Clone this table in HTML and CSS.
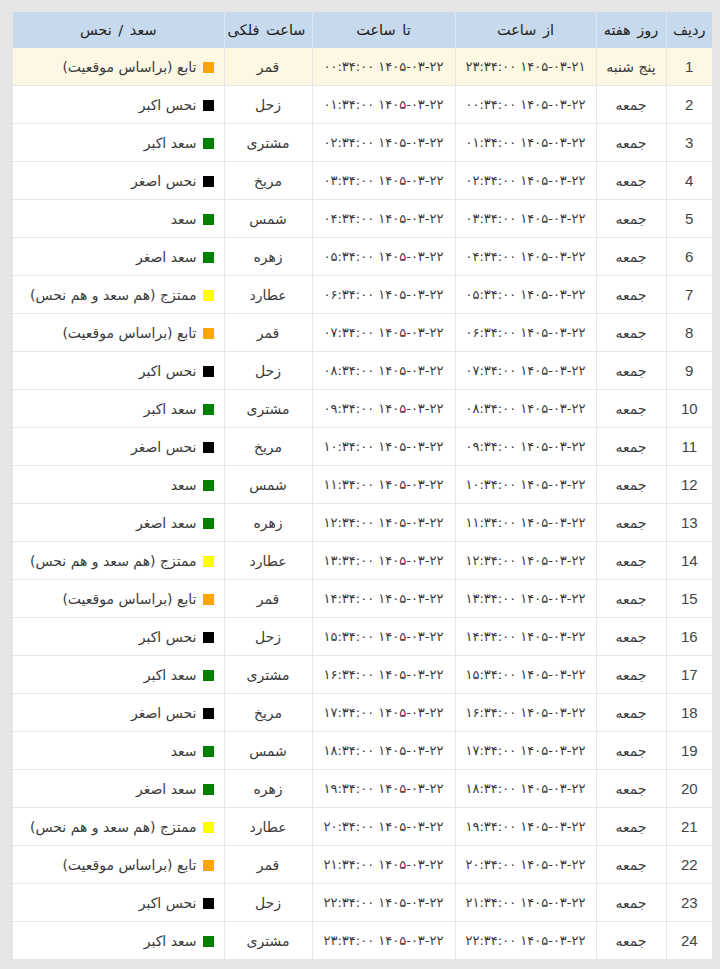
FILE: index.html
```html
<!DOCTYPE html>
<html lang="fa">
<head>
<meta charset="utf-8">
<link rel="stylesheet" href="styles.css">
</head>
<body>
<div class="page">
<table class="hours" dir="rtl">
<colgroup>
<col class="c-num"><col class="c-day"><col class="c-from"><col class="c-to"><col class="c-planet"><col class="c-state">
</colgroup>
<thead>
<tr><th>ردیف</th><th>روز هفته</th><th>از ساعت</th><th>تا ساعت</th><th>ساعت فلکی</th><th>سعد / نحس</th></tr>
</thead>
<tbody id="rows">
<tr class="current"><td class="num">1</td><td>پنج شنبه</td><td class="dt">۱۴۰۵-۰۳-۲۱ ۲۳:۳۴:۰۰</td><td class="dt">۱۴۰۵-۰۳-۲۲ ۰۰:۳۴:۰۰</td><td>قمر</td><td class="state"><span class="sq orange"></span>تابع (براساس موقعیت)</td></tr>
<tr><td class="num">2</td><td>جمعه</td><td class="dt">۱۴۰۵-۰۳-۲۲ ۰۰:۳۴:۰۰</td><td class="dt">۱۴۰۵-۰۳-۲۲ ۰۱:۳۴:۰۰</td><td>زحل</td><td class="state"><span class="sq black"></span>نحس اکبر</td></tr>
<tr><td class="num">3</td><td>جمعه</td><td class="dt">۱۴۰۵-۰۳-۲۲ ۰۱:۳۴:۰۰</td><td class="dt">۱۴۰۵-۰۳-۲۲ ۰۲:۳۴:۰۰</td><td>مشتری</td><td class="state"><span class="sq green"></span>سعد اکبر</td></tr>
<tr><td class="num">4</td><td>جمعه</td><td class="dt">۱۴۰۵-۰۳-۲۲ ۰۲:۳۴:۰۰</td><td class="dt">۱۴۰۵-۰۳-۲۲ ۰۳:۳۴:۰۰</td><td>مریخ</td><td class="state"><span class="sq black"></span>نحس اصغر</td></tr>
<tr><td class="num">5</td><td>جمعه</td><td class="dt">۱۴۰۵-۰۳-۲۲ ۰۳:۳۴:۰۰</td><td class="dt">۱۴۰۵-۰۳-۲۲ ۰۴:۳۴:۰۰</td><td>شمس</td><td class="state"><span class="sq green"></span>سعد</td></tr>
<tr><td class="num">6</td><td>جمعه</td><td class="dt">۱۴۰۵-۰۳-۲۲ ۰۴:۳۴:۰۰</td><td class="dt">۱۴۰۵-۰۳-۲۲ ۰۵:۳۴:۰۰</td><td>زهره</td><td class="state"><span class="sq green"></span>سعد اصغر</td></tr>
<tr><td class="num">7</td><td>جمعه</td><td class="dt">۱۴۰۵-۰۳-۲۲ ۰۵:۳۴:۰۰</td><td class="dt">۱۴۰۵-۰۳-۲۲ ۰۶:۳۴:۰۰</td><td>عطارد</td><td class="state"><span class="sq yellow"></span>ممتزج (هم سعد و هم نحس)</td></tr>
<tr><td class="num">8</td><td>جمعه</td><td class="dt">۱۴۰۵-۰۳-۲۲ ۰۶:۳۴:۰۰</td><td class="dt">۱۴۰۵-۰۳-۲۲ ۰۷:۳۴:۰۰</td><td>قمر</td><td class="state"><span class="sq orange"></span>تابع (براساس موقعیت)</td></tr>
<tr><td class="num">9</td><td>جمعه</td><td class="dt">۱۴۰۵-۰۳-۲۲ ۰۷:۳۴:۰۰</td><td class="dt">۱۴۰۵-۰۳-۲۲ ۰۸:۳۴:۰۰</td><td>زحل</td><td class="state"><span class="sq black"></span>نحس اکبر</td></tr>
<tr><td class="num">10</td><td>جمعه</td><td class="dt">۱۴۰۵-۰۳-۲۲ ۰۸:۳۴:۰۰</td><td class="dt">۱۴۰۵-۰۳-۲۲ ۰۹:۳۴:۰۰</td><td>مشتری</td><td class="state"><span class="sq green"></span>سعد اکبر</td></tr>
<tr><td class="num">11</td><td>جمعه</td><td class="dt">۱۴۰۵-۰۳-۲۲ ۰۹:۳۴:۰۰</td><td class="dt">۱۴۰۵-۰۳-۲۲ ۱۰:۳۴:۰۰</td><td>مریخ</td><td class="state"><span class="sq black"></span>نحس اصغر</td></tr>
<tr><td class="num">12</td><td>جمعه</td><td class="dt">۱۴۰۵-۰۳-۲۲ ۱۰:۳۴:۰۰</td><td class="dt">۱۴۰۵-۰۳-۲۲ ۱۱:۳۴:۰۰</td><td>شمس</td><td class="state"><span class="sq green"></span>سعد</td></tr>
<tr><td class="num">13</td><td>جمعه</td><td class="dt">۱۴۰۵-۰۳-۲۲ ۱۱:۳۴:۰۰</td><td class="dt">۱۴۰۵-۰۳-۲۲ ۱۲:۳۴:۰۰</td><td>زهره</td><td class="state"><span class="sq green"></span>سعد اصغر</td></tr>
<tr><td class="num">14</td><td>جمعه</td><td class="dt">۱۴۰۵-۰۳-۲۲ ۱۲:۳۴:۰۰</td><td class="dt">۱۴۰۵-۰۳-۲۲ ۱۳:۳۴:۰۰</td><td>عطارد</td><td class="state"><span class="sq yellow"></span>ممتزج (هم سعد و هم نحس)</td></tr>
<tr><td class="num">15</td><td>جمعه</td><td class="dt">۱۴۰۵-۰۳-۲۲ ۱۳:۳۴:۰۰</td><td class="dt">۱۴۰۵-۰۳-۲۲ ۱۴:۳۴:۰۰</td><td>قمر</td><td class="state"><span class="sq orange"></span>تابع (براساس موقعیت)</td></tr>
<tr><td class="num">16</td><td>جمعه</td><td class="dt">۱۴۰۵-۰۳-۲۲ ۱۴:۳۴:۰۰</td><td class="dt">۱۴۰۵-۰۳-۲۲ ۱۵:۳۴:۰۰</td><td>زحل</td><td class="state"><span class="sq black"></span>نحس اکبر</td></tr>
<tr><td class="num">17</td><td>جمعه</td><td class="dt">۱۴۰۵-۰۳-۲۲ ۱۵:۳۴:۰۰</td><td class="dt">۱۴۰۵-۰۳-۲۲ ۱۶:۳۴:۰۰</td><td>مشتری</td><td class="state"><span class="sq green"></span>سعد اکبر</td></tr>
<tr><td class="num">18</td><td>جمعه</td><td class="dt">۱۴۰۵-۰۳-۲۲ ۱۶:۳۴:۰۰</td><td class="dt">۱۴۰۵-۰۳-۲۲ ۱۷:۳۴:۰۰</td><td>مریخ</td><td class="state"><span class="sq black"></span>نحس اصغر</td></tr>
<tr><td class="num">19</td><td>جمعه</td><td class="dt">۱۴۰۵-۰۳-۲۲ ۱۷:۳۴:۰۰</td><td class="dt">۱۴۰۵-۰۳-۲۲ ۱۸:۳۴:۰۰</td><td>شمس</td><td class="state"><span class="sq green"></span>سعد</td></tr>
<tr><td class="num">20</td><td>جمعه</td><td class="dt">۱۴۰۵-۰۳-۲۲ ۱۸:۳۴:۰۰</td><td class="dt">۱۴۰۵-۰۳-۲۲ ۱۹:۳۴:۰۰</td><td>زهره</td><td class="state"><span class="sq green"></span>سعد اصغر</td></tr>
<tr><td class="num">21</td><td>جمعه</td><td class="dt">۱۴۰۵-۰۳-۲۲ ۱۹:۳۴:۰۰</td><td class="dt">۱۴۰۵-۰۳-۲۲ ۲۰:۳۴:۰۰</td><td>عطارد</td><td class="state"><span class="sq yellow"></span>ممتزج (هم سعد و هم نحس)</td></tr>
<tr><td class="num">22</td><td>جمعه</td><td class="dt">۱۴۰۵-۰۳-۲۲ ۲۰:۳۴:۰۰</td><td class="dt">۱۴۰۵-۰۳-۲۲ ۲۱:۳۴:۰۰</td><td>قمر</td><td class="state"><span class="sq orange"></span>تابع (براساس موقعیت)</td></tr>
<tr><td class="num">23</td><td>جمعه</td><td class="dt">۱۴۰۵-۰۳-۲۲ ۲۱:۳۴:۰۰</td><td class="dt">۱۴۰۵-۰۳-۲۲ ۲۲:۳۴:۰۰</td><td>زحل</td><td class="state"><span class="sq black"></span>نحس اکبر</td></tr>
<tr><td class="num">24</td><td>جمعه</td><td class="dt">۱۴۰۵-۰۳-۲۲ ۲۲:۳۴:۰۰</td><td class="dt">۱۴۰۵-۰۳-۲۲ ۲۳:۳۴:۰۰</td><td>مشتری</td><td class="state"><span class="sq green"></span>سعد اکبر</td></tr>
</tbody>
</table>
</div>
</body>
</html>
```
FILE: styles.css
```css
html, body {
  margin: 0;
  padding: 0;
  background: #e5e5e5;
}
.page {
  padding: 12px 8px 11px 13px;
}
.hours {
  width: 699px;
  table-layout: fixed;
  border-collapse: collapse;
  background: #ffffff;
  font-family: "DejaVu Sans", sans-serif;
  font-size: 14px;
  color: #3a3a3a;
}
.c-num { width: 46px; }
.c-day { width: 70px; }
.c-from { width: 141px; }
.c-to { width: 143px; }
.c-planet { width: 88px; }
.c-state { width: 211px; }

.hours th {
  background: #c7d9ec;
  height: 36px;
  padding: 0 6px;
  font-weight: normal;
  font-size: 14.5px;
  color: #222222;
  border-left: 1px solid #dbe5ef;
  text-align: center;
  white-space: nowrap;
  word-spacing: 2px;
}
.hours td {
  height: 37px;
  padding: 0 4px;
  text-align: center;
  border-top: 1px solid #e6e6e6;
  border-left: 1px solid #e6e6e6;
  white-space: nowrap;
}
.hours td.dt {
  font-size: 13px;
}
.hours td:last-child, .hours th:last-child { border-left: none; }
.hours tr.current td {
  background: #fcf8e3;
  border-top: none;
}
.hours td.num {
  font-family: "Liberation Sans", Arial, sans-serif;
  font-size: 15px;
  color: #444444;
}
.hours td.state {
  text-align: right;
  padding-right: 10px;
}
.sq {
  display: inline-block;
  width: 11px;
  height: 11px;
  margin-left: 6px;
  vertical-align: -1px;
}
.sq.orange { background: #ffa500; }
.sq.black { background: #000000; }
.sq.green { background: #008000; }
.sq.yellow { background: #ffff00; }
```
